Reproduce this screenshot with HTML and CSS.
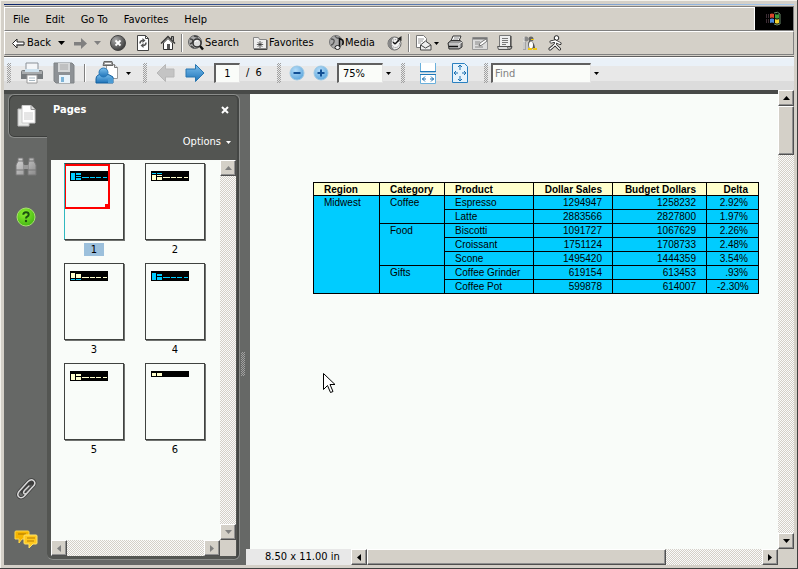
FILE: index.html
```html
<!DOCTYPE html>
<html lang="en">
<head>
  <meta charset="UTF-8">
  <title>Sales Report</title>
  <link rel="stylesheet" href="styles.css">
</head>
<body>
  <svg class="defs" width="0" height="0" aria-hidden="true">
    <defs>
      <linearGradient id="blue" x1="0" y1="0" x2="0" y2="1"><stop offset="0" stop-color="#7cc0ee"/><stop offset="1" stop-color="#1d72b8"/></linearGradient>
      <linearGradient id="gray" x1="0" y1="0" x2="1" y2="1"><stop offset="0" stop-color="#d8d8d8"/><stop offset="1" stop-color="#8a8a8a"/></linearGradient>
      <radialGradient id="ball" cx=".35" cy=".3" r=".8"><stop offset="0" stop-color="#aaa"/><stop offset="1" stop-color="#303030"/></radialGradient>
      <radialGradient id="orb" cx=".4" cy=".3" r=".75"><stop offset="0" stop-color="#b4dcf8"/><stop offset="1" stop-color="#5aa5dc"/></radialGradient>
      <radialGradient id="green" cx=".4" cy=".3" r=".8"><stop offset="0" stop-color="#8cf030"/><stop offset="1" stop-color="#3cb010"/></radialGradient>
      <symbol id="down" viewBox="0 0 7 4"><path d="M0 0h7L3.500 4z" fill="currentColor"/></symbol>
      <symbol id="s-up" viewBox="0 0 7 4"><path d="M0 4h7L3.500 0z" fill="currentColor"/></symbol>
      <symbol id="s-left" viewBox="0 0 4 7"><path d="M4 0v7L0 3.500z" fill="currentColor"/></symbol>
      <symbol id="s-right" viewBox="0 0 4 7"><path d="M0 0v7l4-3.500z" fill="currentColor"/></symbol>
    </defs>
  </svg>

  <div class="window">
    <div class="rebar">
      <div class="menu-row">
        <nav class="menu">
          <button>File</button>
          <button>Edit</button>
          <button>Go To</button>
          <button>Favorites</button>
          <button>Help</button>
        </nav>
        <div class="brand">
          <svg width="18" height="16" viewBox="0 0 18 16">
            <path d="M5 3q2-1 4 0v4q-2-1-4 0z" fill="#d8452c"/>
            <path d="M10 3q2 1 4 0v4q-2 1-4 0z" fill="#3f9a3a"/>
            <path d="M5 8q2-1 4 0v4q-2-1-4 0z" fill="#4686d8"/>
            <path d="M10 8q2 1 4 0v4q-2 1-4 0z" fill="#f0d030"/>
            <path d="M9 2q4-2 6 1v10q-3 2-6 0" fill="none" stroke="#6a8a6a"/>
            <path d="M1 4h3M1 6h3M1 9h3M1 11h3" stroke="#7a5a6a" stroke-dasharray="1 1"/>
          </svg>
        </div>
      </div>
      <div class="ie-bar">
        <button class="tool back">
          <svg width="13" height="11" viewBox="0 0 13 11"><path d="M.5 5.500L5 1v3h7v3H5v3z" fill="#fff" stroke="#222"/><path d="M4 7h8" stroke="#555"/></svg>
          Back
          <svg class="drop" width="7" height="4"><use href="#down"/></svg>
        </button>
        <button class="tool forward" aria-label="Forward">
          <svg width="13" height="11" viewBox="0 0 13 11"><path d="M0 4h7V0l6 5.500L7 11V7.500H0z" fill="#808080"/></svg>
          <svg class="drop" width="7" height="4"><use href="#down"/></svg>
        </button>
        <button class="tool" aria-label="Stop">
          <svg width="16" height="16" viewBox="0 0 16 16"><circle cx="8" cy="8" r="7.500" fill="url(#ball)" stroke="#444"/><path d="M5.500 5.500l5 5M10.500 5.500l-5 5" stroke="#fff" stroke-width="1.800"/></svg>
        </button>
        <button class="tool" aria-label="Refresh">
          <svg width="16" height="16" viewBox="0 0 16 16"><path d="M2.500.5h8l3 3v12h-11z" fill="#fff" stroke="#444"/><path d="M10.500.5v3h3" fill="none" stroke="#444"/><path d="M5 8.500q0-3 3-3M11 7.500q0 3-3 3" fill="none" stroke="#555" stroke-width="1.500"/><path d="M7.500 3l3 2.500-3 2.500zM8.500 8l-3 2.500 3 2.500z" fill="#555"/></svg>
        </button>
        <button class="tool" aria-label="Home">
          <svg width="16" height="16" viewBox="0 0 16 16"><path d="M3.500 8v6.500h9V8L8 3.500z" fill="#fff" stroke="#333"/><path d="M1 8.500L8 1.500l7 7" fill="none" stroke="#333" stroke-width="1.300"/><path d="M11.500 4V1.500h2V6" fill="#999" stroke="#333"/><path d="M7 9h3v5H7z" fill="#555"/></svg>
        </button>
        <span class="divider"></span>
        <button class="tool search">
          <svg width="16" height="16" viewBox="0 0 16 16"><circle cx="7" cy="7" r="6.500" fill="#aaa" stroke="#666"/><path d="M2 4q3 0 3 2t-3 3M6 1l4 1M3 11l3 2" fill="none" stroke="#444" stroke-width="1.500"/><circle cx="9" cy="8" r="4" fill="#ddd" stroke="#333" stroke-width="1.500"/><path d="M7 7q1-2 3-1" fill="none" stroke="#fff"/><path d="M12 11l3 3.500" stroke="#111" stroke-width="2.500"/></svg>
          Search
        </button>
        <button class="tool fav">
          <svg width="16" height="16" viewBox="0 0 16 16"><path d="M1.500 2.500h5l1 2h7v9h-13z" fill="#eee" stroke="#888"/><path d="M15 5v9.500H2" fill="none" stroke="#444"/><path d="M8 6v7M4.800 9.500h6.400M5.700 7.200l4.600 4.600M10.300 7.200l-4.600 4.600" stroke="#333" stroke-width=".8"/></svg>
          Favorites
        </button>
        <button class="tool media">
          <svg width="16" height="16" viewBox="0 0 16 16"><circle cx="7" cy="7" r="6.500" fill="#aaa" stroke="#777"/><path d="M2 4q4 0 3 3t-3 3M6 1q2 3 4 2" fill="none" stroke="#555" stroke-width="1.300"/><path d="M10.500 12V3.500l3 1.500q1.500 2 0 5" fill="none" stroke="#111" stroke-width="1.500"/><ellipse cx="8.500" cy="12.500" rx="2.500" ry="2" fill="#eee" stroke="#222"/></svg>
          Media
        </button>
        <button class="tool" aria-label="History">
          <svg width="16" height="16" viewBox="0 0 16 16"><circle cx="7.500" cy="8.500" r="6.500" fill="#eee" stroke="#666"/><path d="M7.500 2a6.500 6.500 0 100 13L5 12V5z" fill="#888"/><circle cx="8.500" cy="8.500" r="4" fill="#f4f4f4" stroke="#777" stroke-dasharray="1 1"/><path d="M8 9l4-4M8 9L6 7" stroke="#111" stroke-width="1.500"/><path d="M14.500 1v5L10 4z" fill="#222"/></svg>
        </button>
        <span class="divider"></span>
        <button class="tool mail" aria-label="Mail">
          <svg width="17" height="16" viewBox="0 0 17 16"><path d="M1.500.5h7l3 3v9h-10z" fill="#fff" stroke="#777"/><path d="M3 4h6M3 6h5M3 8h3" stroke="#999"/><path d="M5.500 10l5-4 5.500 4v5H5.500z" fill="#eee" stroke="#444"/><path d="M5.500 10l5 3L16 10" fill="none" stroke="#444"/></svg>
          <svg class="drop" width="5" height="3"><use href="#down"/></svg>
        </button>
        <button class="tool" aria-label="Print">
          <svg width="16" height="16" viewBox="0 0 16 16"><path d="M4 6l2-5h8l-2 5z" fill="#fff" stroke="#333"/><path d="M7 3h5M6 5h5" stroke="#888"/><path d="M1 8l3-2.500h9L15 7v5l-3 2H2z" fill="#999" stroke="#333"/><path d="M2 9h10v4M12 9l3-2" fill="none" stroke="#eee"/><path d="M2 11.500h9" stroke="#111"/></svg>
        </button>
        <button class="tool" aria-label="Edit">
          <svg width="16" height="16" viewBox="0 0 16 16"><path d="M.5 2.500h15v12H.5z" fill="#ddd" stroke="#999"/><path d="M1 3.500h14" stroke="#777" stroke-width="2"/><path d="M3 7h5M3 9h4M3 12h8" stroke="#888"/><path d="M7 11l1-3 6-4 1 2-5 4z" fill="#fff" stroke="#777"/></svg>
        </button>
        <button class="tool" aria-label="Discuss">
          <svg width="16" height="16" viewBox="0 0 16 16"><path d="M2.500.5h11v11h-11z" fill="#eee" stroke="#777"/><path d="M14 1v10" stroke="#333"/><path d="M5 3.500h6M5 5.500h6M5 7.500h6M5 9.500h4" stroke="#777"/><path d="M.5 11.500h10q0 3 2 3h-11z" fill="#ddd" stroke="#555"/><path d="M12 14.500q3 0 3-3h-4.500" fill="#aaa" stroke="#444"/></svg>
        </button>
        <button class="tool" aria-label="Messenger">
          <svg width="16" height="16" viewBox="0 0 16 16"><circle cx="4" cy="4" r="2.500" fill="#888"/><path d="M1 7h6v8H1z" fill="#a4a4a4"/><path d="M2 2v12M5 7v8" stroke="#eee"/><circle cx="9" cy="4" r="2.500" fill="#666"/><path d="M7 6q5-1 6 7l-5 1q-3-4-1-8z" fill="#555"/><ellipse cx="9" cy="10" rx="2" ry="3.500" fill="#fff"/><path d="M9 4h3v1H9zM6 13h4v2H6zM11 13h4v2h-4z" fill="#f0c810"/></svg>
        </button>
        <button class="tool runner" aria-label="Instant Messenger">
          <svg width="16" height="16" viewBox="0 0 16 16"><circle cx="9.500" cy="3" r="2.300" fill="#fff" stroke="#222"/><path d="M8 6L4 7M8.500 6v4l4 4M8.500 9L6 11.500 3 14M9 6.500l4 2" fill="none" stroke="#222" stroke-width="3" stroke-linecap="round"/><path d="M8 6L4 7M8.500 6v4l4 4M8.500 9L6 11.500 3 14M9 6.500l4 2" fill="none" stroke="#fff" stroke-width="1.400" stroke-linecap="round"/></svg>
        </button>
      </div>
    </div>

    <div class="pdf-bar">
      <div class="group files">
        <span class="grip"></span>
        <button class="tool" aria-label="Print document">
          <svg width="24" height="24" viewBox="0 0 24 24"><path d="M6 2h12v8H6z" fill="#f4f6f8" stroke="#8a9097"/><path d="M1 11q0-2 2-2h18q2 0 2 2v7H1z" fill="#777b7e"/><path d="M2 10h20v3H2z" fill="#a8abad"/><path d="M5 8h14v3H5z" fill="#cfe2ee"/><path d="M7 14h10v8H7z" fill="#fff" stroke="#999"/><path d="M9 17h6M9 19.500h6" stroke="#a8b8c2"/></svg>
        </button>
        <button class="tool" aria-label="Save a copy">
          <svg width="22" height="22" viewBox="0 0 22 22"><path d="M1 1h18l2 2v18H3l-2-2z" fill="#8d9195" stroke="#7f8386"/><path d="M5 1h12v9H5z" fill="#d5d7d8"/><path d="M7 3h8M7 5h8M7 7h8" stroke="#aaa"/><path d="M6 13h11v8H6z" fill="#e9f3fa"/><path d="M8 15h3v5H8z" fill="#7db4d8"/></svg>
        </button>
        <span class="divider"></span>
        <button class="tool mail" aria-label="Review">
          <svg width="26" height="24" viewBox="0 0 26 24"><path d="M11.500 3.500h8l3 3v11h-11z" fill="#fff" stroke="#999"/><path d="M19.500 3.500v3h3" fill="#ddd" stroke="#777"/><path d="M9 .5h8l1 4H8z" fill="#a0a0a0" stroke="#666"/><path d="M10 2.500h6" stroke="#fff"/><path d="M1 22v-4q0-5 7-5t10 3v6z" fill="url(#blue)" stroke="#14609e"/><circle cx="8.500" cy="11.500" r="4.500" fill="url(#blue)" stroke="#2878b8"/><path d="M13 17h5v5h-5z" fill="#4b9bd4"/></svg>
          <svg class="drop" width="5" height="3"><use href="#down"/></svg>
        </button>
      </div>
      <div class="group paging">
        <span class="grip"></span>
        <button class="tool" aria-label="Previous page">
          <svg width="20" height="20" viewBox="0 0 20 20"><path d="M1 10L9.500 1.500V6H18v8H9.500v4.500z" fill="#c4c4c4" stroke="#b8b8b8"/></svg>
        </button>
        <button class="tool" aria-label="Next page">
          <svg width="20" height="20" viewBox="0 0 20 20"><path d="M19 10l-8.500-8.500V6H1v8h9.500v4.500z" fill="url(#blue)" stroke="#2876b0"/></svg>
        </button>
        <label class="page-no"><input class="field page-input" type="text" value="1" aria-label="Page">/  6</label>
      </div>
      <div class="group zooming">
        <span class="grip"></span>
        <button class="tool" aria-label="Zoom out">
          <svg width="16" height="16" viewBox="0 0 16 16"><circle cx="8" cy="8" r="7" fill="url(#orb)" stroke="#9cc8e4"/><path d="M4.500 8h7" stroke="#114f94" stroke-width="2"/></svg>
        </button>
        <button class="tool" aria-label="Zoom in">
          <svg width="16" height="16" viewBox="0 0 16 16"><circle cx="8" cy="8" r="7" fill="url(#orb)" stroke="#9cc8e4"/><path d="M4.500 8h7M8 4.500v7" stroke="#114f94" stroke-width="2"/></svg>
        </button>
        <div class="combo">
          <input class="field zoom-input" type="text" value="75%" aria-label="Zoom level">
          <button aria-label="Zoom presets"><svg width="5" height="3"><use href="#down"/></svg></button>
        </div>
      </div>
      <div class="group fitting">
        <span class="grip"></span>
        <button class="tool" aria-label="Fit width">
          <svg width="18" height="22" viewBox="0 0 18 22"><path d="M1.500 1v9h15V1M1.500 21.500v-9h15v9z" fill="#fff" stroke="#6bb0dc"/><path d="M1 9.500h16M1 12.500h16" stroke="#1f78b8"/><path d="M3 17h4M11 17h4M6 14.500L3.500 17 6 19.500M12 14.500l2.500 2.500-2.500 2.500" fill="none" stroke="#1c70b0"/></svg>
        </button>
        <button class="tool" aria-label="Fit page">
          <svg width="18" height="22" viewBox="0 0 18 22"><path d="M1.500 1.500h12l3 3v16h-15z" fill="#e6f3fc" stroke="#2a80c0"/><path d="M9 3v5M9 14v5M3 11h4M11 11h4M7 5l2-2 2 2M7 17l2 2 2-2M5 9l-2 2 2 2M13 9l2 2-2 2" fill="none" stroke="#1c70b0"/></svg>
        </button>
      </div>
      <div class="group finding">
        <span class="grip"></span>
        <div class="combo">
          <input class="field find-input" type="text" placeholder="Find" aria-label="Find">
          <button aria-label="Find options"><svg width="5" height="3"><use href="#down"/></svg></button>
        </div>
      </div>
    </div>

    <div class="workspace">
      <aside class="sidebar">
        <div class="tabs">
          <button class="tab active" aria-label="Pages">
            <svg width="20" height="24" viewBox="0 0 20 24"><path d="M1 5h11v17H1z" fill="#e8eae8" stroke="#bbb"/><path d="M5 1.500h9l4 4V19H5z" fill="#fff" stroke="#ccc"/><path d="M14 1.500v4h4" fill="#ddd" stroke="#999"/><path d="M7 9h9M7 11h9M7 13h9M7 15h9" stroke="#ccc"/></svg>
          </button>
          <button class="tab" aria-label="Search">
            <svg width="22" height="20" viewBox="0 0 22 20"><path d="M3 4V1h5v3l1 4v10H1V8zM14 4V1h5v3l2 4v10h-8V8z" fill="url(#gray)" stroke="#777"/><path d="M9 8h4v4H9z" fill="#999"/><path d="M1 13h8M13 13h8M3 4h5M14 4h5" stroke="#777"/></svg>
          </button>
          <button class="tab" aria-label="How To">
            <svg width="22" height="22" viewBox="0 0 22 22"><circle cx="11" cy="11" r="9" fill="url(#green)" stroke="#a8e070"/><path d="M8.300 8.800q0-2.600 2.700-2.600t2.700 2.400q0 1.400-1.500 2.100-1.200.6-1.200 1.800" fill="none" stroke="#1c5010" stroke-width="2"/><circle cx="11" cy="15" r="1.200" fill="#1c5010"/></svg>
          </button>
          <span class="spacer"></span>
          <button class="tab" aria-label="Attachments">
            <svg width="22" height="24" viewBox="0 0 22 24"><g fill="none" stroke-linecap="round"><path d="M7 15l7-8q2-2 3.500-.5t0 3.500l-8 9q-3 3-5.500 1t0-5.500L13 4.500q3-3 5.500-1t.5 5L12 16q-2 1.500-3 .5t.5-3L14 9" stroke="#3c3c3c" stroke-width="3"/><path d="M19 8.500L12 16q-2 1.500-3 .5t.5-3L14 9M19 8.500q2-3-.5-5t-5.500 1L4 14.500q-2.500 3.500 0 5.500t5.500-1l8-9" stroke="#d8d8d8" stroke-width="1.500"/></g></svg>
          </button>
          <button class="tab" aria-label="Comments">
            <svg width="24" height="20" viewBox="0 0 24 20"><path d="M2 2h12q1 0 1 1v7H8l-3 4v-4H1V3q0-1 1-1z" fill="#f5b400" stroke="#ffd94a"/><path d="M4 5h8" stroke="#a87400"/><path d="M11 6h11q1 0 1 1v7q0 1-1 1h-3l-4 4v-4h-4q-1 0-1-1V7q0-1 1-1z" fill="#ffc81e" stroke="#ffe36a"/><path d="M13 9h8M13 12h7" stroke="#b87c00"/></svg>
          </button>
        </div>
        <section class="panel">
          <header class="panel-head">
            <h2>Pages</h2>
            <button class="close" aria-label="Close"><svg width="8" height="8" viewBox="0 0 8 8"><path d="M1 1l6 6M7 1L1 7" stroke="#fff" stroke-width="2"/></svg></button>
          </header>
          <button class="options">Options <svg width="5" height="3"><use href="#down"/></svg></button>
          <div class="panel-body">
            <div class="thumbs">
              <figure class="thumb current">
                <div class="sheet"><svg width="38" height="10"><path d="M0 0h38v10H0z"/><path d="M1 2h4v7H1zM6 2h5v2H6zM6 5h5v1H6zM6 7h5v2H6zM12 6h7v1h-7zM20 6h5v1h-5zM26 6h5v1h-5zM33 6h4v1h-4z" fill="#00ccff"/></svg><span class="view"></span></div>
                <figcaption>1</figcaption>
              </figure>
              <figure class="thumb">
                <div class="sheet"><svg width="38" height="10"><path d="M0 0h38v10H0z"/><path d="M1 2h4v1H1zM6 2h5v1H6z" fill="#00ccff"/><path d="M1 4h4v5H1zM6 4h5v1H6zM6 6h5v3H6zM12 6h7v1h-7zM20 6h5v1h-5zM26 6h5v1h-5zM33 6h4v1h-4z" fill="#ffffcc"/></svg></div>
                <figcaption>2</figcaption>
              </figure>
              <figure class="thumb">
                <div class="sheet"><svg width="38" height="10"><path d="M0 0h38v10H0z"/><path d="M1 2h4v5H1zM6 3h5v4H6zM12 6h7v1h-7zM20 6h5v1h-5zM26 6h5v1h-5zM33 6h4v1h-4z" fill="#ffffcc"/><path d="M1 8h4v1H1zM6 8h5v1H6z" fill="#00ccff"/></svg></div>
                <figcaption>3</figcaption>
              </figure>
              <figure class="thumb">
                <div class="sheet"><svg width="38" height="10"><path d="M0 0h38v10H0z"/><path d="M1 2h4v7H1zM6 3h5v2H6zM6 6h5v3H6zM12 6h7v1h-7zM20 6h5v1h-5zM26 6h5v1h-5zM33 6h4v1h-4z" fill="#00ccff"/></svg></div>
                <figcaption>4</figcaption>
              </figure>
              <figure class="thumb">
                <div class="sheet"><svg width="38" height="10"><path d="M0 0h38v10H0z"/><path d="M1 3h4v6H1zM6 3h5v2H6zM6 6h5v3H6zM12 6h7v1h-7zM20 6h5v1h-5zM26 6h5v1h-5zM33 6h4v1h-4z" fill="#ffffcc"/></svg></div>
                <figcaption>5</figcaption>
              </figure>
              <figure class="thumb">
                <div class="sheet"><svg width="38" height="10"><path d="M0 0h38v6H0z"/><path d="M1 2h4v3H1zM6 2h5v3H6z" fill="#ffffcc"/></svg></div>
                <figcaption>6</figcaption>
              </figure>
            </div>
            <div class="scroll vertical disabled">
              <button aria-label="Scroll up"><svg width="7" height="4"><use href="#s-up"/></svg></button>
              <button aria-label="Scroll down"><svg width="7" height="4"><use href="#down"/></svg></button>
            </div>
            <div class="scroll disabled">
              <button aria-label="Scroll left"><svg width="4" height="7"><use href="#s-left"/></svg></button>
              <button aria-label="Scroll right"><svg width="4" height="7"><use href="#s-right"/></svg></button>
            </div>
            <div class="corner"></div>
          </div>
        </section>
        <div class="splitter"><span class="grip"></span></div>
      </aside>

      <main class="document">
        <div class="view-area">
          <div class="page">
            <table class="report">
              <colgroup><col class="c-region"><col class="c-category"><col class="c-product"><col class="c-sales"><col class="c-budget"><col class="c-delta"></colgroup>
              <thead>
                <tr><th>Region</th><th>Category</th><th>Product</th><th class="num">Dollar Sales</th><th class="num">Budget Dollars</th><th class="num">Delta</th></tr>
              </thead>
              <tbody>
                <tr><td rowspan="7">Midwest</td><td rowspan="2">Coffee</td><td>Espresso</td><td class="num">1294947</td><td class="num">1258232</td><td class="num">2.92%</td></tr>
                <tr><td>Latte</td><td class="num">2883566</td><td class="num">2827800</td><td class="num">1.97%</td></tr>
                <tr><td rowspan="3">Food</td><td>Biscotti</td><td class="num">1091727</td><td class="num">1067629</td><td class="num">2.26%</td></tr>
                <tr><td>Croissant</td><td class="num">1751124</td><td class="num">1708733</td><td class="num">2.48%</td></tr>
                <tr><td>Scone</td><td class="num">1495420</td><td class="num">1444359</td><td class="num">3.54%</td></tr>
                <tr><td rowspan="2">Gifts</td><td>Coffee Grinder</td><td class="num">619154</td><td class="num">613453</td><td class="num">.93%</td></tr>
                <tr><td>Coffee Pot</td><td class="num">599878</td><td class="num">614007</td><td class="num">-2.30%</td></tr>
              </tbody>
            </table>
            <svg class="cursor" width="13" height="21" viewBox="0 0 13 21"><path d="M.5.500v16l4-4 3 7 2.500-1-3-7h5z" fill="#fff" stroke="#000"/></svg>
          </div>
          <div class="scroll vertical">
            <button aria-label="Scroll up"><svg width="7" height="4"><use href="#s-up"/></svg></button>
            <span class="thumb-v"></span>
            <button aria-label="Scroll down"><svg width="7" height="4"><use href="#down"/></svg></button>
          </div>
        </div>
        <div class="status-row">
          <span class="status">8.50 x 11.00 in</span>
          <div class="scroll">
            <button aria-label="Scroll left"><svg width="4" height="7"><use href="#s-left"/></svg></button>
            <span class="thumb-h"></span>
            <button aria-label="Scroll right"><svg width="4" height="7"><use href="#s-right"/></svg></button>
          </div>
          <div class="corner"></div>
        </div>
      </main>
    </div>
  </div>
</body>
</html>
```

FILE: styles.css
```css
* {
  box-sizing: border-box;
}
body {
  margin: 0;
  font-family: 'DejaVu Sans Condensed', 'DejaVu Sans', sans-serif;
  font-size: 11px;
  line-height: 14px;
  color: #000;
  background: #d4d0c8;
}
button {
  font: inherit;
  color: inherit;
  background: none;
  border: none;
  padding: 0;
  white-space: nowrap;
}
svg {
  display: block;
  flex: none;
}
.defs {
  position: absolute;
}
.window {
  height: 100vh;
  display: flex;
  flex-direction: column;
  padding: 4px 3px 3px 4px;
  border-right: 1px solid #404040;
  border-bottom: 1px solid #404040;
  background: #d4d0c8;
  box-shadow: inset 1px 1px 0 #f4f2ec;
}

/* browser bars */
.rebar {
  border-style: solid;
  border-width: 1px 0 0;
  border-image: linear-gradient(90deg, #0a246a, #a6caf0) 1;
  padding-top: 1px;
  flex: none;
  height: 53px;
}
.menu-row {
  display: flex;
  height: 25px;
  border: 1px solid #808080;
  border-left-color: #fff;
  box-shadow: inset 0 1px 0 #fff;
}
.menu {
  flex: 1;
  display: flex;
  align-items: center;
  gap: 16px;
  padding: 2px 0 0 8px;
}
.brand {
  width: 39px;
  background: #000;
  border-left: 1px solid #fff;
  display: flex;
  align-items: center;
  justify-content: center;
}
.ie-bar {
  display: flex;
  align-items: center;
  height: 24px;
  padding-left: 7px;
  border: 1px solid #808080;
  border-top-color: #fff;
  border-left-color: #fff;
  gap: 9px;
}
.tool {
  display: flex;
  align-items: center;
  gap: 2px;
  flex: none;
}
.back {
  width: 53px;
}
.back .drop,
.forward .drop,
.mail .drop {
  margin-left: auto;
}
.forward {
  width: 27px;
  color: #808080;
}
.search {
  width: 55px;
  gap: 1px;
}
.fav {
  width: 68px;
  gap: 1px;
}
.media {
  width: 49px;
  gap: 0;
}
.ie-bar .mail {
  width: 23px;
}
.divider {
  width: 2px;
  height: 18px;
  border-left: 1px solid #808080;
  border-right: 1px solid #fff;
  flex: none;
}
.ie-bar .divider {
  margin: 0 -4px;
}

/* viewer toolbar */
.pdf-bar {
  flex: none;
  display: flex;
  height: 33px;
  padding-bottom: 2px;
  border-top: 1px solid #fff;
  box-shadow: 0 -1px 0 #606060;
  background: linear-gradient(#eaf1f8 8px, #e8e8e8 8px, #e8e8e8 23px, #dcdcdc 23px);
}
.group {
  display: flex;
  align-items: center;
  flex: none;
}
.files {
  width: 139px;
  padding-left: 3px;
  gap: 9px;
}
.files .mail {
  width: 36px;
}
.paging {
  width: 134px;
  gap: 9px;
}
.zooming {
  width: 124px;
  gap: 8px;
}
.fitting {
  width: 83px;
  gap: 14px;
}
.finding {
  gap: 3px;
}
.grip {
  width: 4px;
  height: 20px;
  flex: none;
  background: repeating-conic-gradient(#a0a0a0 0 25%, transparent 0 50%) 0 0 / 2px 2px;
}
.page-no {
  display: flex;
  align-items: center;
  gap: 6px;
  white-space: pre;
}
.field {
  font: inherit;
  height: 20px;
  border: 1px solid #e4e4e4;
  border-top: 2px solid #606060;
  border-left: 2px solid #606060;
  border-radius: 0;
  background: #fafcf9;
  padding: 0 4px;
  outline: none;
}
.field::placeholder {
  color: #808080;
  opacity: 1;
}
.page-input {
  width: 26px;
  text-align: center;
}
.zoom-input {
  width: 46px;
}
.find-input {
  width: 100px;
  padding: 0 2px;
}
.combo {
  display: flex;
  align-items: center;
}
.combo button {
  width: 11px;
  display: flex;
  justify-content: center;
}

/* workspace */
.workspace {
  flex: 1;
  min-height: 0;
  display: flex;
  border-top: 4px solid #484a48;
}
.sidebar {
  flex: none;
  display: flex;
  width: 242px;
  background: #666866;
}
.tabs {
  width: 43px;
  display: flex;
  flex-direction: column;
  align-items: center;
  padding: 0 0 1px 4px;
}
.tab {
  width: 39px;
  height: 50px;
  display: flex;
  align-items: center;
  justify-content: center;
  padding-right: 3px;
}
.tab.active {
  height: 44px;
  margin-bottom: 4px;
  background: #535552;
  border: 1px solid #8a8c8a;
  border-right: none;
  border-radius: 6px 0 0 6px;
  box-shadow: inset 1px 1px 0 #3c3e3c, inset 0 -1px 0 #3c3e3c;
}
.spacer {
  flex: 1;
}
.panel {
  flex: 1;
  min-width: 0;
  display: flex;
  flex-direction: column;
  margin-bottom: 5px;
  padding: 0 3px 3px 4px;
  background: #535552;
  border: 1px solid #8a8c8a;
  border-left: none;
  border-radius: 0 6px 6px 6px;
  box-shadow: inset -2px 0 0 #444644, inset 0 1px 0 #3c3e3c;
}
.panel-head {
  display: flex;
  justify-content: space-between;
  align-items: center;
  padding: 8px 7px 0 2px;
  color: #fff;
}
.panel-head h2 {
  margin: 0;
  font-size: 11px;
  line-height: 14px;
}
.options {
  align-self: flex-end;
  display: flex;
  align-items: center;
  gap: 5px;
  margin: 18px 5px 11px 0;
  color: #fff;
}
.panel-body {
  flex: 1;
  min-height: 0;
  display: grid;
  grid-template-columns: 1fr 16px;
  grid-template-rows: 1fr 16px;
  background: #f9fcf9;
}
.thumbs {
  display: grid;
  grid-template-columns: 60px 60px;
  grid-auto-rows: 100px;
  column-gap: 21px;
  padding: 3px 0 0 13px;
  min-height: 0;
}
.thumb {
  margin: 0;
  display: flex;
  flex-direction: column;
  align-items: center;
}
.sheet {
  position: relative;
  width: 60px;
  height: 77px;
  padding: 7px 0 0 5px;
  border: 1px solid #404240;
  box-shadow: 1px 1px 0 #707270;
}
.view {
  position: absolute;
  top: 0;
  left: 0;
  width: 45px;
  height: 45px;
  border: 2px solid #f00;
  border-left-width: 1px;
}
.view::after {
  content: '';
  position: absolute;
  right: 0;
  bottom: 0;
  width: 3px;
  height: 3px;
  background: #f00;
}
.current .sheet {
  border-left-color: #30b8c0;
}
figcaption {
  width: 20px;
  margin-top: 3px;
  line-height: 13px;
  text-align: center;
}
.current figcaption {
  background: #9cc0dc;
}
.splitter {
  width: 6px;
  flex: none;
  display: flex;
  align-items: center;
  justify-content: center;
}
.splitter .grip {
  height: 24px;
  margin-top: 68px;
}

/* scroll bars */
.scroll {
  display: flex;
  justify-content: space-between;
  height: 16px;
  flex: 1;
  background: repeating-conic-gradient(#d4d0c8 0 25%, #fafafa 0 50%) 0 0 / 2px 2px;
}
.scroll.vertical {
  flex: none;
  flex-direction: column;
  width: 16px;
  height: auto;
}
.scroll button,
.thumb-v,
.thumb-h {
  flex: none;
  width: 16px;
  height: 16px;
  background: #d4d0c8;
  border: 1px solid #fff;
  border-right-color: #505050;
  border-bottom-color: #505050;
  box-shadow: inset -1px -1px 0 #909090;
}
.scroll button {
  display: flex;
  align-items: center;
  justify-content: center;
}
.disabled button {
  color: #808080;
}
.scroll .thumb-v {
  height: 49px;
  margin-bottom: auto;
}
.scroll .thumb-h {
  width: 70%;
  margin-right: auto;
}
.corner {
  width: 16px;
  background: #d4d0c8;
}

/* document */
.document {
  flex: 1;
  min-width: 0;
  display: flex;
  flex-direction: column;
}
.view-area {
  flex: 1;
  min-height: 0;
  display: flex;
  border-left: 4px solid #666866;
}
.view-area .vertical {
  margin-top: -4px;
}
.page {
  position: relative;
  flex: 1;
  min-width: 0;
  overflow: hidden;
  padding: 88px 0 0 63px;
  background: #f9fcf9;
}
.report {
  table-layout: fixed;
  width: 446px;
  border-collapse: collapse;
  font-family: 'Liberation Sans', Arial, sans-serif;
  font-size: 10px;
  line-height: 12px;
  background: #00ccff;
}
.report th,
.report td {
  height: 14px;
  padding: 1px 10px 0;
  border: 1px solid #000;
  text-align: left;
  vertical-align: top;
  white-space: nowrap;
}
.report th {
  height: 13px;
  line-height: 11px;
  background: #ffffcc;
}
.report .num {
  text-align: right;
}
.c-region {
  width: 66px;
}
.c-category {
  width: 65px;
}
.c-product {
  width: 89px;
}
.c-sales {
  width: 79px;
}
.c-budget {
  width: 94px;
}
.c-delta {
  width: 52px;
}
.cursor {
  position: absolute;
  left: 73px;
  top: 279px;
}
.status-row {
  flex: none;
  display: flex;
  height: 16px;
}
.status {
  width: 105px;
  padding-left: 19px;
  line-height: 16px;
  background: #e8e8e8;
  white-space: nowrap;
}
```
